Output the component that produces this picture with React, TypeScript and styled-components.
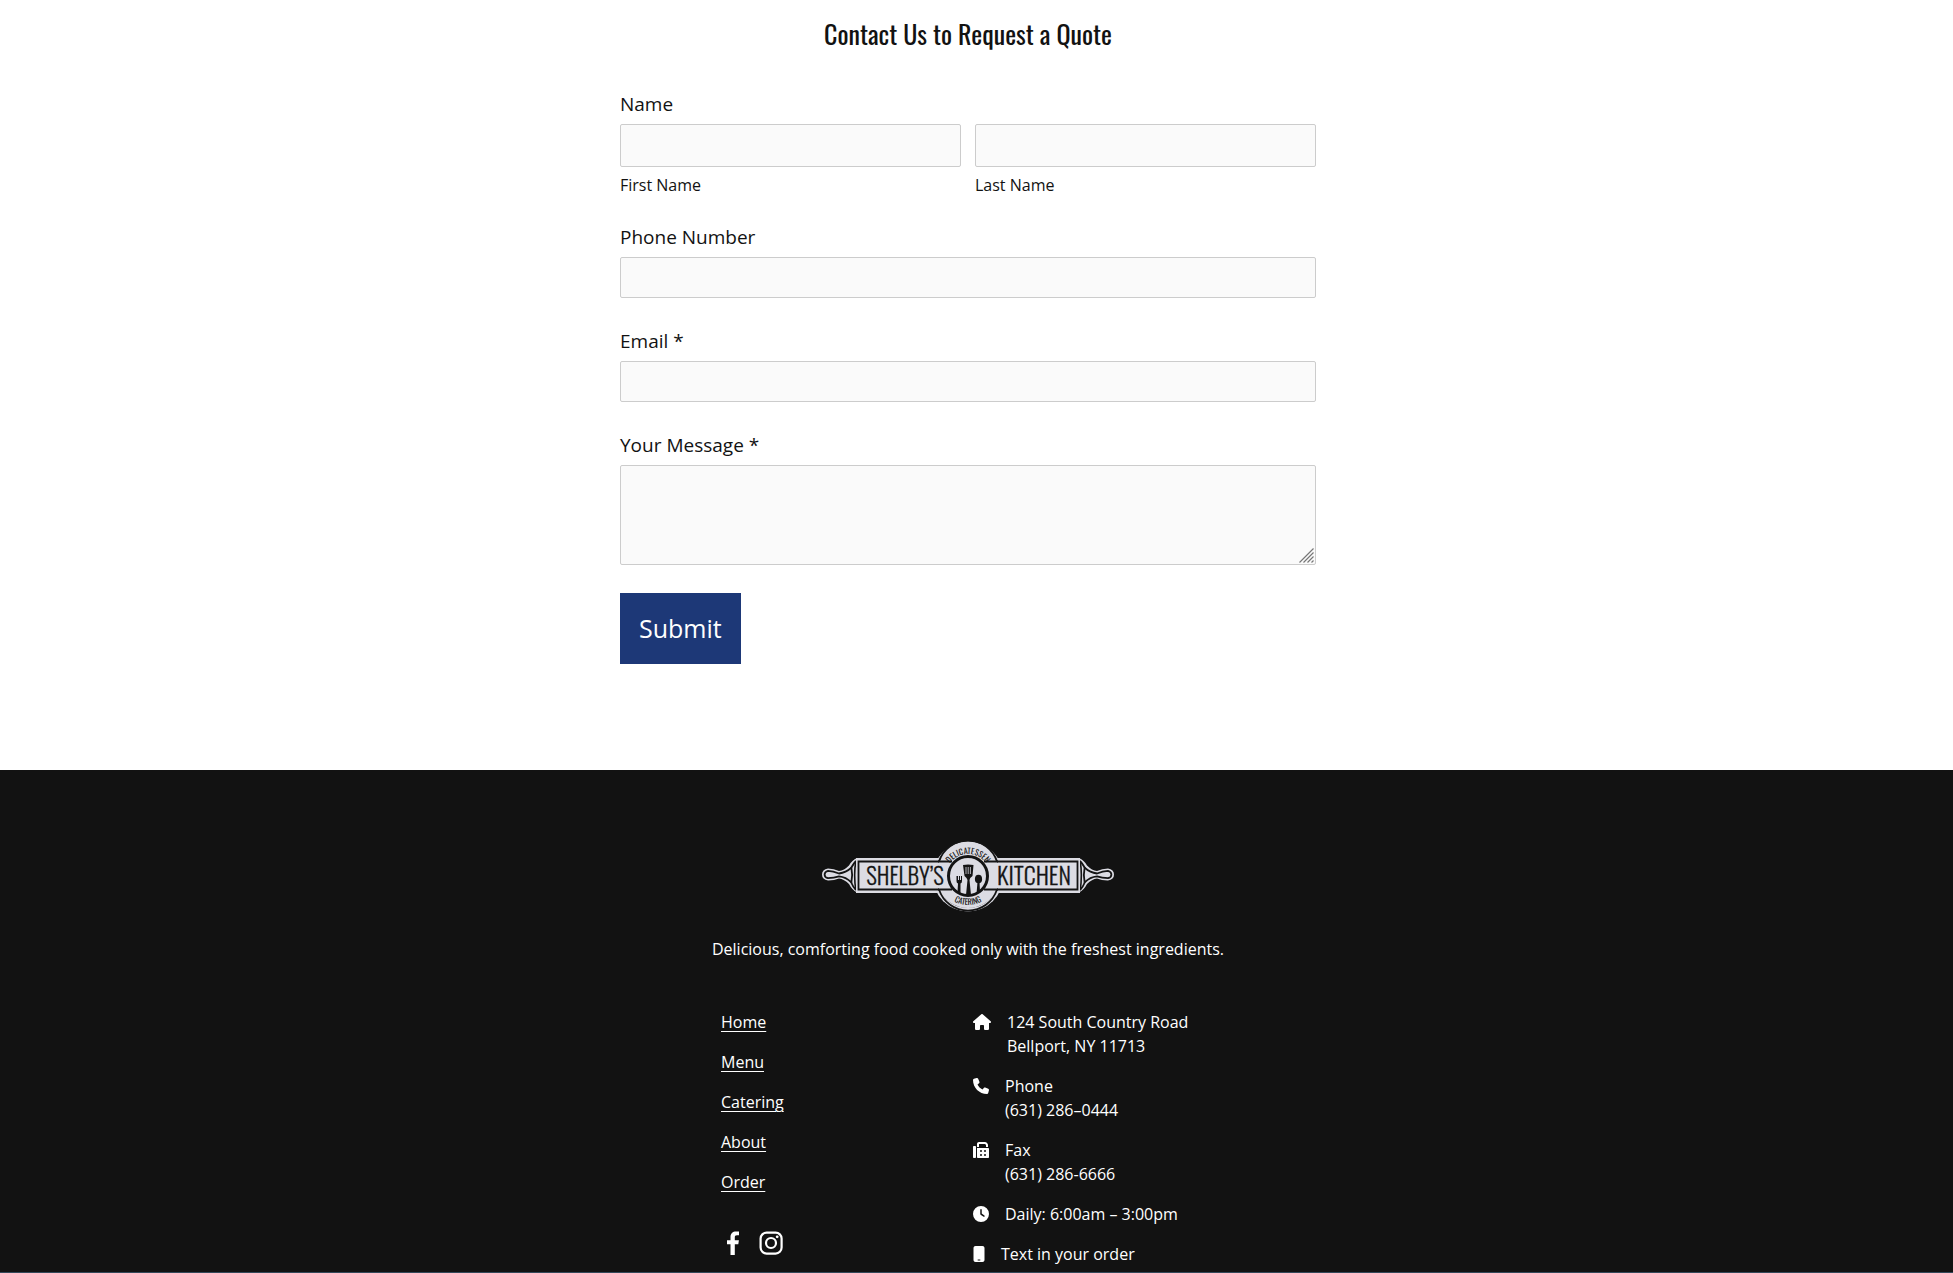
import React from "react";
import styled, { createGlobalStyle } from "styled-components";
import { FaHouse, FaPhone, FaFax, FaClock, FaMobile } from "react-icons/fa6";

const GlobalStyle = createGlobalStyle`
  *, *::before, *::after { box-sizing: border-box; }
  body {
    margin: 0;
    background: #fff;
    color: #121212;
    font-family: "Open Sans", "Noto Sans", sans-serif;
    font-size: 16px;
    line-height: 24px;
  }
`;

const QuoteSection = styled.section`
  padding: 14px 17px 106px 0;
`;

const Title = styled.h2`
  margin: 0 0 36px;
  font-family: Oswald, "Roboto Condensed", "Liberation Sans Narrow", sans-serif;
  font-size: 26px;
  font-weight: 400;
  line-height: 40px;
  text-align: center;
`;

const Form = styled.form`
  max-width: 696px;
  margin: 0 auto;
`;

const Fields = styled.div`
  display: flex;
  flex-direction: column;
  gap: 29px;
  margin-bottom: 28px;
`;

const Field = styled.div`
  display: flex;
  flex-direction: column;
  gap: 6px;
`;

const NameGroup = styled.fieldset`
  min-width: 0;
  margin: 0;
  padding: 0;
  border: 0;
`;

const NameLegend = styled.legend`
  margin-bottom: 6px;
  padding: 0;
  font-size: 19px;
  line-height: 28px;
`;

const NameRow = styled.div`
  display: grid;
  grid-template-columns: 1fr 1fr;
  gap: 14px;
`;

const NamePart = styled.div`
  display: flex;
  flex-direction: column;
  gap: 9px;
`;

const Label = styled.label`
  font-size: 19px;
  line-height: 28px;
`;

const SubLabel = styled.label`
  line-height: 18px;
`;

const Input = styled.input<{ $tall?: boolean }>`
  width: 100%;
  height: ${(p) => (p.$tall ? 43 : 41)}px;
  padding: 0 12px;
  border: 1px solid #ccc;
  border-radius: 2px;
  background: #fafafa;
  font: inherit;
`;

const MessageBox = styled.div`
  position: relative;
`;

const Message = styled.textarea`
  display: block;
  width: 100%;
  height: 100px;
  padding: 12px;
  border: 1px solid #ccc;
  border-radius: 2px;
  background: #fafafa;
  font: inherit;
  resize: vertical;

  &::-webkit-resizer {
    background: transparent;
  }
`;

const Grip = styled.svg`
  position: absolute;
  right: 2px;
  bottom: 2px;
  pointer-events: none;
`;

const Submit = styled.button`
  display: block;
  padding: 0 19px;
  border: 0;
  background: #1d3877;
  color: #fff;
  font: inherit;
  font-size: 25px;
  line-height: 71px;
`;

const Footer = styled.footer`
  display: flex;
  flex-direction: column;
  align-items: center;
  padding: 71px 17px 6px 0;
  background: #121212;
  color: #fff;
`;

const Tagline = styled.p`
  margin: 25px 0 49px;
  text-align: center;
`;

const Columns = styled.div`
  display: grid;
  grid-template-columns: 1fr 1fr;
  gap: 10px;
  width: 100%;
  max-width: 494px;
`;

const List = styled.ul`
  display: flex;
  flex-direction: column;
  gap: 16px;
  margin: 0;
  padding: 0;
  list-style: none;
`;

const NavLink = styled.a`
  color: inherit;
  text-decoration: underline 1px;
  text-underline-offset: 3px;
`;

const Social = styled.div`
  display: flex;
  gap: 14px;
  margin-top: 37px;
`;

const SocialLink = styled.a`
  display: flex;
  color: inherit;
`;

const ContactItem = styled.li<{ $icon: number }>`
  display: flex;
  align-items: flex-start;
  gap: 16px;

  svg {
    flex: none;
    width: ${(p) => p.$icon}px;
    height: 16px;
    margin-top: 4px;
  }
`;

const NextSection = styled.div`
  height: 1px;
  background: #33485a;
`;

const WordMark = styled.text<{ $size: number }>`
  font-family: Oswald, "Roboto Condensed", sans-serif;
  font-size: ${(p) => p.$size}px;
  font-weight: 300;
  text-anchor: middle;
`;

const ArcText = styled.text`
  font-family: Oswald, "Roboto Condensed", sans-serif;
  font-size: 8px;
  font-weight: 400;
  text-anchor: middle;
`;

function Logo() {
  const ink = "#141414";
  const paper = "#dcdce3";
  return (
    <svg width="292" height="71" viewBox="0 0 292 71" role="img" aria-label="Shelby's Kitchen Delicatessen Catering">
      <defs>
        <path id="arcTop" d="M 123.500 35.500 A 22.500 22.500 0 0 1 168.500 35.500" />
        <path id="arcBottom" d="M 117.500 35.500 A 28.500 28.500 0 0 0 174.500 35.500" />
      </defs>
      <circle cx="146" cy="35.500" r="35" fill={paper} />
      <circle cx="146" cy="35.500" r="30.500" fill="none" stroke={ink} strokeWidth="1.600" />
      {[false, true].map((flip) => (
        <g key={String(flip)} transform={flip ? "translate(292 0) scale(-1 1)" : undefined}>
          <path d="M35 17 Q30 19 27 24.500 Q22 29.500 17 30 Q12 28 6 27.600 Q0 28.500 0 33.500 Q0 38.800 6 39.400 Q12 39.500 17 37.500 Q22 38 27 43 Q30 49 35 51.500 Z" fill={paper} />
          <path
            d="M34 20 Q32 22 29 27 Q24 31.500 17 32.500 Q11 30 6 29.800 Q2.600 30.600 2.600 33.500 Q2.600 36.600 6 37.200 Q12 37 17 35.300 Q24 36 29 41 Q31 46 34 49"
            fill="none"
            stroke={ink}
            strokeWidth="1.800"
          />
          <path d="M29.300 26 Q31 34 29.300 42" fill="none" stroke={ink} strokeWidth="1.800" />
          <path d="M33.800 20 Q31.500 34 33.800 49" fill="none" stroke={ink} strokeWidth="1.600" />
        </g>
      ))}
      <rect x="34" y="17" width="224" height="35" fill={paper} />
      <path d="M117 20.500 H36.500 V48.500 H117 M175 20.500 H255.500 V48.500 H175" fill="none" stroke={ink} strokeWidth="1.800" />
      <path d="M117 20.500 A32 32 0 0 1 175 20.500 L168 22 H124 Z" fill={paper} />
      <path d="M117 48.500 A32 32 0 0 0 175 48.500 L168 47 H124 Z" fill={paper} />
      <path d="M117 20.500 A30.500 30.500 0 0 1 175 20.500 M117 48.500 A30.500 30.500 0 0 0 175 48.500" fill="none" stroke={ink} strokeWidth="1.800" />
      <path d="M116 20.500 H130 M162 20.500 H176 M116 48.500 H130 M162 48.500 H176" stroke={ink} strokeWidth="1.800" />
      <circle cx="146" cy="35" r="19.500" fill={paper} stroke={ink} strokeWidth="3" />
      <g fill={ink}>
        <path d="M141 24 Q146 23 151.500 24 L150.500 35 Q147.500 37 147.500 39 L149 54 H144 L145.500 39 Q145 37 142.500 35 Z" />
        <path d="M134.500 35 V40 Q134.500 42 136 42.500 L135.500 51 L138.500 53 L138.500 42.500 Q140 42 140 40 V35 H139 V39 H138 V35 H137 V39 H136 V35 Z" />
        <ellipse cx="156.500" cy="38" rx="3.600" ry="4.300" />
        <path d="M155.500 41 H157.500 L158 51 L154.500 53 Z" />
      </g>
      <path d="M144 26 V33 M146.200 26 V33 M148.400 26 V33" stroke={paper} strokeWidth=".8" />
      <WordMark x="83" y="44" $size={23} fill={ink} stroke={ink} strokeWidth=".3">SHELBY’S</WordMark>
      <WordMark x="212" y="44" $size={24} fill={ink} stroke={ink} strokeWidth=".3">KITCHEN</WordMark>
      <ArcText fill={ink}>
        <textPath href="#arcTop" startOffset="50%">DELICATESSEN</textPath>
      </ArcText>
      <ArcText fill={ink}>
        <textPath href="#arcBottom" startOffset="50%">CATERING</textPath>
      </ArcText>
    </svg>
  );
}

const links = ["Home", "Menu", "Catering", "About", "Order"];

const contacts = [
  { Icon: FaHouse, size: 18, lines: ["124 South Country Road", "Bellport, NY 11713"] },
  { Icon: FaPhone, size: 16, lines: ["Phone", "(631) 286–0444"] },
  { Icon: FaFax, size: 16, lines: ["Fax", "(631) 286-6666"] },
  { Icon: FaClock, size: 16, lines: ["Daily: 6:00am – 3:00pm"] },
  { Icon: FaMobile, size: 12, lines: ["Text in your order"] },
];

export default function App() {
  return (
    <>
      <GlobalStyle />
      <QuoteSection>
        <Title>Contact Us to Request a Quote</Title>
        <Form onSubmit={(e) => e.preventDefault()}>
          <Fields>
            <NameGroup>
              <NameLegend>Name</NameLegend>
              <NameRow>
                <NamePart>
                  <Input $tall id="first" type="text" />
                  <SubLabel htmlFor="first">First Name</SubLabel>
                </NamePart>
                <NamePart>
                  <Input $tall id="last" type="text" />
                  <SubLabel htmlFor="last">Last Name</SubLabel>
                </NamePart>
              </NameRow>
            </NameGroup>
            <Field>
              <Label htmlFor="phone">Phone Number</Label>
              <Input id="phone" type="tel" />
            </Field>
            <Field>
              <Label htmlFor="email">Email *</Label>
              <Input id="email" type="email" required />
            </Field>
            <Field>
              <Label htmlFor="message">Your Message *</Label>
              <MessageBox>
                <Message id="message" required />
                <Grip width="15" height="15" viewBox="0 0 15 15" aria-hidden>
                  <path d="M0.500 14.500 L14.500 0.500 M4.500 14.500 L14.500 4.500 M8.500 14.500 L14.500 8.500 M12.500 14.500 L14.500 12.500" stroke="#777" strokeWidth="1.200" />
                </Grip>
              </MessageBox>
            </Field>
          </Fields>
          <Submit type="submit">Submit</Submit>
        </Form>
      </QuoteSection>
      <Footer>
        <Logo />
        <Tagline>Delicious, comforting food cooked only with the freshest ingredients.</Tagline>
        <Columns>
          <nav>
            <List>
              {links.map((name) => (
                <li key={name}>
                  <NavLink href={"#" + name.toLowerCase()}>{name}</NavLink>
                </li>
              ))}
            </List>
            <Social>
              <SocialLink href="#facebook" aria-label="Facebook">
                <svg width="24" height="24" viewBox="0 0 24 24" fill="currentColor">
                  <path d="M9.500 24V13.300H6V9.200h3.500V6C9.500 2.300 11.700.4 15 .4c1.500 0 2.500.1 3 .2v3.700h-2c-1.700 0-2.200.8-2.200 2v2.900h4.100l-.6 4.100h-3.500V24z" />
                </svg>
              </SocialLink>
              <SocialLink href="#instagram" aria-label="Instagram">
                <svg width="24" height="24" viewBox="0 0 24 24" fill="none" stroke="currentColor" strokeWidth="2.200">
                  <rect x="1.600" y="1.600" width="21" height="21" rx="6" />
                  <circle cx="12" cy="12" r="5" />
                  <circle cx="18.200" cy="5.800" r="1.400" fill="currentColor" stroke="none" />
                </svg>
              </SocialLink>
            </Social>
          </nav>
          <List>
            {contacts.map(({ Icon, size, lines }) => (
              <ContactItem key={lines[0]} $icon={size}>
                <Icon aria-hidden />
                <div>
                  {lines.map((line) => (
                    <div key={line}>{line}</div>
                  ))}
                </div>
              </ContactItem>
            ))}
          </List>
        </Columns>
      </Footer>
      <NextSection />
    </>
  );
}
